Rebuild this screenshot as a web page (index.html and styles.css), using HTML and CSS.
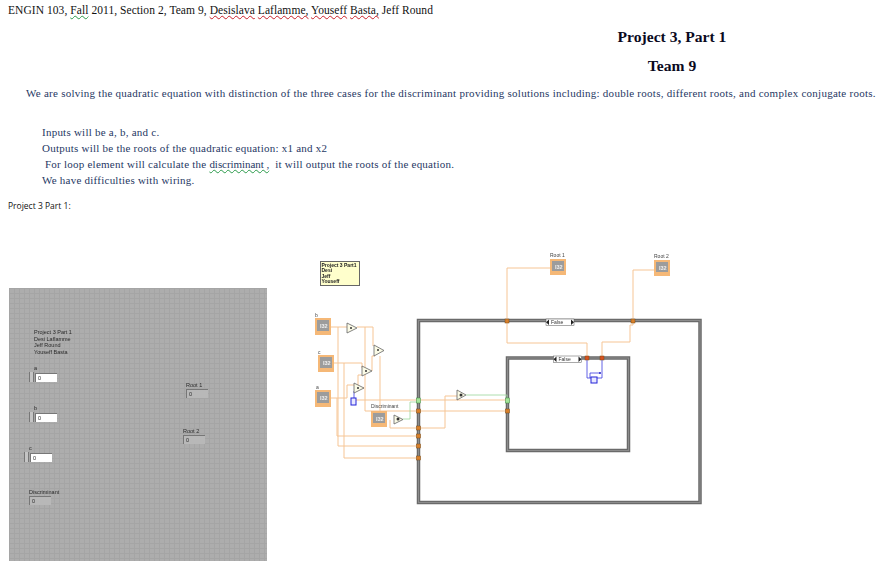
FILE: index.html
```html
<!DOCTYPE html>
<html lang="en">
<head>
<meta charset="UTF-8" />
<title>ENGIN 103 Project 3, Part 1</title>
<link rel="stylesheet" href="styles.css">
</head>
<body>
  <p class="byline">ENGIN 103, <span class="grammar">Fall</span> 2011, Section 2, Team 9, <span class="spell">Desislava</span> <span class="spell">Laflamme,</span> <span class="spell">Youseff</span> <span class="spell">Basta,</span> Jeff Round</p>

  <div class="titles">
    <h1>Project 3, Part 1</h1>
    <h2>Team 9</h2>
  </div>

  <p class="summary">We are solving the quadratic equation with distinction of the three cases for the discriminant providing solutions including: double roots, different roots, and complex conjugate roots.</p>

  <div class="notes">
    <div>Inputs will be a, b, and c.</div>
    <div>Outputs will be the roots of the quadratic equation: x1 and x2</div>
    <div>&nbsp;For loop element will calculate the <span class="grammar">discriminant ,</span>&nbsp; it will output the roots of the equation.</div>
    <div>We have difficulties with wiring.</div>
  </div>

  <p class="caption">Project 3 Part 1:</p>

  <div class="figures">
    <div class="panel">
      <div class="panel-note">Project 3 Part 1<br>Desi Laflamme<br>Jeff Round<br>Youseff Basta</div>

      <div class="ctl ctl-a"><span class="ctl-label">a</span><div class="ctl-row"><span class="spin"></span><span class="num">0</span></div></div>
      <div class="ctl ctl-b"><span class="ctl-label">b</span><div class="ctl-row"><span class="spin"></span><span class="num">0</span></div></div>
      <div class="ctl ctl-c"><span class="ctl-label">c</span><div class="ctl-row"><span class="spin"></span><span class="num">0</span></div></div>

      <div class="ctl ctl-disc"><span class="ctl-label">Discriminant</span><div class="ctl-row"><span class="num out">0</span></div></div>
      <div class="ctl ctl-r1"><span class="ctl-label">Root 1</span><div class="ctl-row"><span class="num out">0</span></div></div>
      <div class="ctl ctl-r2"><span class="ctl-label">Root 2</span><div class="ctl-row"><span class="num out">0</span></div></div>
    </div>

    <svg class="diagram" width="410" height="265" viewBox="300 245 410 265">
      <!-- structures -->
      <rect class="frame" x="418.5" y="320.5" width="281.5" height="182"/>
      <rect class="frame-in" x="418.5" y="320.5" width="281.5" height="182"/>
      <rect class="frame" x="507.5" y="358" width="121" height="92.5"/>
      <rect class="frame-in" x="507.5" y="358" width="121" height="92.5"/>

      <!-- orange wires -->
      <g class="wire">
        <path d="M331 327H347M357 327H373V346M365 327V411H507"/>
        <path d="M338 327V446H418"/>
        <path d="M331 398H337V436H418M337 398H347V385H354"/>
        <path d="M334 363H362V368M344 363V458H418"/>
        <path d="M364 388H358V375H362"/>
        <path d="M372 371V356H375"/>
        <path d="M380 356V412"/>
        <path d="M356 400H507"/>
        <path d="M390 420V428H445V396H457"/>
        <path d="M551 268H507V343H587V358"/>
        <path d="M654 270H633V325H630V342H602V358"/>
      </g>

      <!-- green and blue wires -->
      <path class="wire-green" d="M403 419H410V402H418M466 395H507V400"/>
      <path class="wire-blue" d="M354 398V391M587 358V378H591M602 358V378H597M590 378V373H600"/>
      <circle cx="600" cy="373" r="1" fill="#2323c8"/>

      <!-- tunnels -->
      <g class="tunnel">
        <rect x="505" y="319" width="4" height="4"/>
        <rect x="631" y="319" width="4" height="4"/>
        <rect class="tunnel-hot" x="585" y="356" width="4" height="4"/>
        <rect class="tunnel-hot" x="600" y="356" width="4" height="4"/>
        <rect x="416.500" y="409" width="4" height="4"/>
        <rect x="416.500" y="426" width="4" height="4"/>
        <rect x="416.500" y="434" width="4" height="4"/>
        <rect x="416.500" y="444" width="4" height="4"/>
        <rect x="416.500" y="456" width="4" height="4"/>
        <rect x="505.500" y="409" width="4" height="4"/>
      </g>
      <rect class="tunnel-green" x="416.500" y="398" width="4" height="5"/>
      <rect class="tunnel-green" x="505.500" y="398" width="4" height="5"/>

      <!-- terminals -->
      <g class="term">
        <rect class="term-box" x="315" y="318" width="16" height="17"/><rect class="term-in" x="317" y="320" width="12" height="11"/><text x="320" y="328">I32</text>
        <rect class="term-box" x="318" y="355" width="16" height="17"/><rect class="term-in" x="320" y="357" width="12" height="11"/><text x="323" y="365">I32</text>
        <rect class="term-box" x="315" y="390" width="16" height="17"/><rect class="term-in" x="317" y="392" width="12" height="11"/><text x="320" y="400">I32</text>
        <rect class="term-box" x="371" y="411" width="16" height="16"/><rect class="term-in" x="373" y="413" width="12" height="10"/><text x="376" y="421">I32</text>
        <rect class="term-box" x="550" y="259" width="16" height="16"/><rect class="term-in" x="552" y="261" width="12" height="10"/><text x="555" y="269">I32</text>
        <rect class="term-box" x="654" y="260" width="16" height="16"/><rect class="term-in" x="656" y="262" width="12" height="10"/><text x="659" y="270">I32</text>
      </g>

      <!-- labels -->
      <g class="term-label">
        <text x="315" y="317">b</text>
        <text x="318" y="354">c</text>
        <text x="316" y="389">a</text>
        <text x="371" y="408">Discriminant</text>
        <text x="550" y="257">Root 1</text>
        <text x="654" y="258">Root 2</text>
      </g>

      <!-- functions -->
      <g class="prim">
        <path d="M347 323L357 328L347 333Z"/>
        <path d="M374 345L384 350.500L374 356Z"/>
        <path d="M362 366L372 371L362 376Z"/>
        <path d="M354 383L364 388L354 393Z"/>
        <path d="M394 415L403 419.500L394 424Z"/>
        <path d="M457 390L466 395L457 400Z"/>
      </g>
      <circle cx="351" cy="328" r="1" fill="#333"/>
      <circle cx="378" cy="350" r="1" fill="#333"/>
      <circle cx="366" cy="371" r="1" fill="#333"/>
      <circle cx="358" cy="388" r="1" fill="#333"/>
      <circle cx="398" cy="419" r="1.500" fill="#333"/>
      <circle cx="461" cy="395" r="1.500" fill="#333"/>

      <!-- constants -->
      <rect class="const" x="351" y="398" width="5" height="7"/>
      <rect class="const" x="591" y="377" width="6" height="6"/>

      <!-- case selectors -->
      <g class="selector">
        <rect x="546" y="319" width="28" height="6.500"/>
        <text x="551" y="324">False</text>
        <path d="M546 322.200L549 319.500V325ZM574 322.200L571 319.500V325Z"/>
        <rect x="553.500" y="356" width="28" height="6.500"/>
        <text x="558.500" y="361">False</text>
        <path d="M553.500 359.200L556.500 356.500V362ZM581.500 359.200L578.500 356.500V362Z"/>
      </g>

      <!-- free label -->
      <rect class="note" x="320.500" y="261.500" width="39" height="24"/>
      <g class="note-text">
        <text x="321.500" y="266.500">Project 3 Part1</text>
        <text x="321.500" y="272">Desi</text>
        <text x="321.500" y="277.500">Jeff</text>
        <text x="321.500" y="283">Youseff</text>
      </g>
    </svg>
  </div>
</body>
</html>
```

FILE: styles.css
```css
body {
  margin: 0;
  background: white;
  font-family: "Liberation Serif", serif;
  color: #111;
  overflow: hidden;
}
p {
  margin: 0;
}
.byline {
  padding: 3px 0 0 8px;
  font-size: 11.500px;
  line-height: 14px;
  letter-spacing: 0.060px;
}
.spell {
  text-decoration: underline wavy #c8202a 1px;
  text-decoration-skip-ink: none;
  text-underline-offset: 0.500px;
}
.grammar {
  text-decoration: underline wavy #2a9a4a 1px;
  text-decoration-skip-ink: none;
  text-underline-offset: 0.500px;
}
.titles {
  margin-top: 10px;
  padding-left: 461px;
  text-align: center;
  color: #0a0a1e;
}
.titles h1,
.titles h2 {
  margin: 0;
  font-size: 15.600px;
  line-height: 20px;
}
.titles h2 {
  margin-top: 9px;
}
.summary {
  margin-top: 10px;
  padding-left: 26px;
  font-size: 11px;
  line-height: 14px;
  letter-spacing: 0.260px;
  white-space: nowrap;
  color: #1f3864;
}
.notes {
  margin-top: 24px;
  padding-left: 42px;
  font-size: 11px;
  line-height: 16px;
  letter-spacing: 0.240px;
  color: #1f3864;
}
.notes .grammar {
  letter-spacing: -0.050px;
}
.caption {
  margin-top: 12px;
  padding-left: 8px;
  font-family: "Open Sans", sans-serif;
  font-size: 8.500px;
  font-weight: 500;
  line-height: 12px;
  color: #111;
}
.figures {
  position: absolute;
  top: 245px;
  left: 0;
  display: flex;
  align-items: flex-start;
}

/* front panel */
.panel {
  position: relative;
  flex: none;
  width: 258px;
  height: 273px;
  margin: 43px 0 0 9px;
  background-color: #adadad;
  background-image:
    linear-gradient(#a5a5a5 1px, transparent 1px),
    linear-gradient(90deg, #a5a5a5 1px, transparent 1px);
  background-size: 5px 5px;
  font-family: "Liberation Sans", sans-serif;
  font-size: 5.500px;
  color: #2a2a2a;
  filter: blur(0.400px);
}
.panel-note {
  position: absolute;
  left: 25px;
  top: 41px;
  line-height: 6.600px;
}
.ctl {
  position: absolute;
}
.ctl-label {
  display: block;
  line-height: 6px;
  padding-left: 5px;
}
.ctl-row {
  display: flex;
  align-items: center;
  margin-top: 1px;
}
.spin {
  width: 5px;
  height: 10px;
  margin-right: 1px;
  background: #c4c4c4;
  border: 1px solid #777;
  border-width: 0 1px;
  box-sizing: border-box;
}
.num {
  display: block;
  width: 22px;
  height: 9px;
  line-height: 9px;
  padding-left: 2px;
  box-sizing: border-box;
  background: white;
  border-top: 1px solid #777;
  border-left: 1px solid #777;
}
.num.out {
  background: #b8b8b8;
}
.ctl-a { left: 20px; top: 77px; }
.ctl-b { left: 20px; top: 117px; }
.ctl-c { left: 15px; top: 157px; }
.ctl-disc { left: 20px; top: 201px; }
.ctl-disc .ctl-label { padding-left: 0; }
.ctl-r1 { left: 177px; top: 94px; }
.ctl-r1 .ctl-label { padding-left: 0; }
.ctl-r2 { left: 174px; top: 140px; }
.ctl-r2 .ctl-label { padding-left: 0; }

/* block diagram */
.diagram {
  flex: none;
  margin-left: 33px;
  filter: blur(0.300px);
}
.frame {
  fill: white;
  stroke: #6a6a6a;
  stroke-width: 3.500px;
}
.frame-in {
  fill: none;
  stroke: #8c8c8c;
  stroke-width: 1px;
}
.wire path {
  fill: none;
  stroke: #f6c595;
  stroke-width: 1px;
}
.wire-green {
  fill: none;
  stroke: #9ad69a;
  stroke-width: 0.800px;
}
.wire-blue {
  fill: none;
  stroke: #3a3ae0;
  stroke-width: 0.800px;
}
.tunnel rect {
  fill: #d9802a;
  stroke: #7a4a14;
  stroke-width: 0.500px;
}
.tunnel rect.tunnel-hot {
  fill: #d8501e;
}
.tunnel-green {
  fill: #a5e59a;
  stroke: #3f8a3f;
  stroke-width: 0.500px;
}
.term-box {
  fill: #f5b877;
}
.term-in {
  fill: #9c9c9c;
}
.term text {
  font-family: "Liberation Sans", sans-serif;
  font-size: 5.500px;
  font-weight: bold;
  fill: #efefef;
}
.term-label text {
  font-family: "Liberation Sans", sans-serif;
  font-size: 5px;
  fill: #444;
}
.prim path {
  fill: #fbfbe6;
  stroke: #666;
  stroke-width: 0.800px;
}
.const {
  fill: #e8e8ff;
  stroke: #2323d8;
  stroke-width: 1px;
}
.selector rect {
  fill: white;
  stroke: #555;
  stroke-width: 0.500px;
}
.selector text {
  font-family: "Liberation Sans", sans-serif;
  font-size: 5px;
  fill: #333;
}
.selector path {
  fill: #222;
}
.note {
  fill: #ffffcc;
  stroke: #666;
  stroke-width: 1px;
}
.note-text text {
  font-family: "Liberation Sans", sans-serif;
  font-size: 5px;
  font-weight: bold;
  fill: #222;
}
```
